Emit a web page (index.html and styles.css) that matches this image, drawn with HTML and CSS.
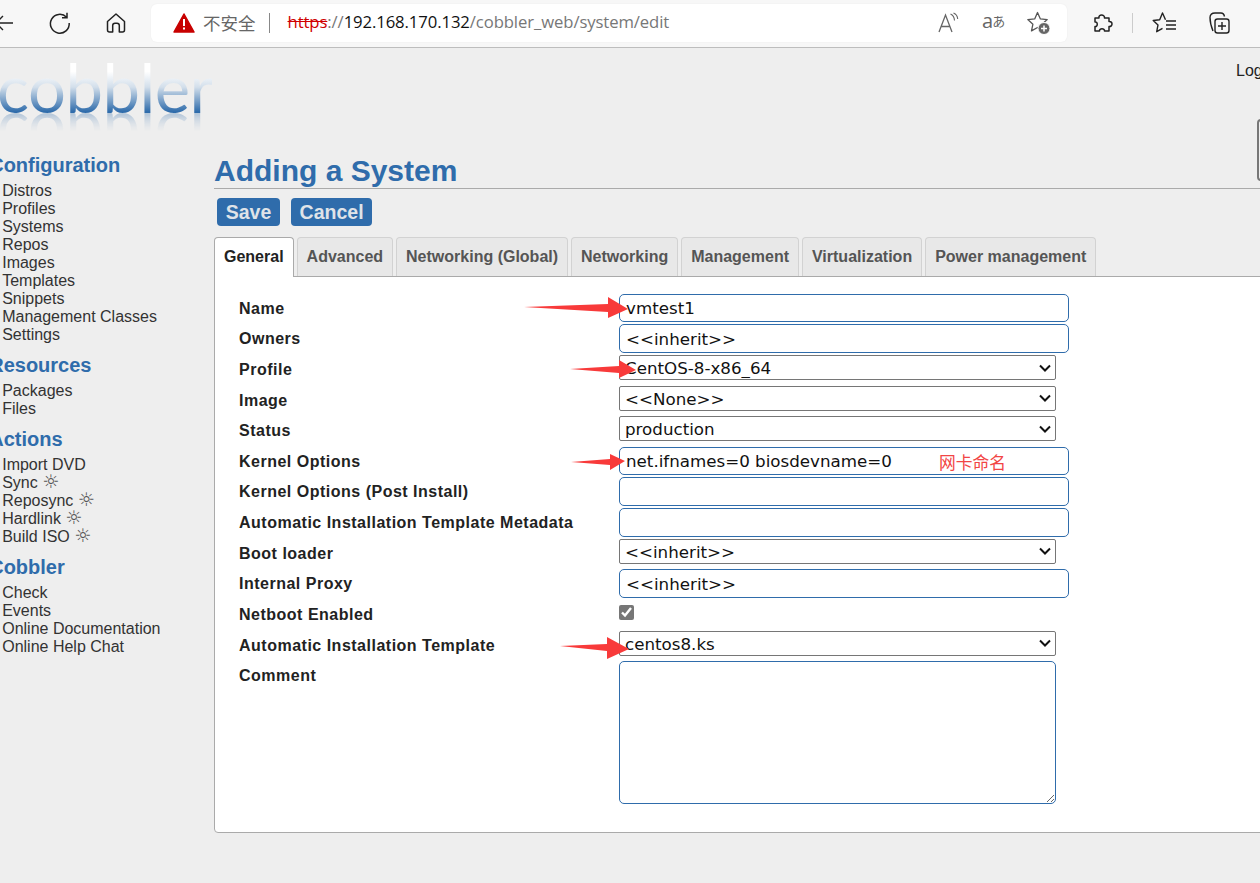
FILE: index.html
```html
<!DOCTYPE html>
<html lang="en">
<head>
<meta charset="utf-8">
<title>Adding a System</title>
<link rel="stylesheet" href="styles.css">
</head>
<body>
<div class="toolbar">
  <div class="nav-icons">
    <svg class="back" width="20" height="20" viewBox="0 0 20 20"><path d="M15 10H-1M5 3l-7 7 7 7" fill="none" stroke="#222" stroke-width="1.4"/></svg>
    <svg class="ic" width="24" height="24" viewBox="0 0 24 24"><path d="M18.6 6.2A9.4 9.4 0 1 0 21.2 12M19 1.8v5h-5" fill="none" stroke="#222" stroke-width="1.5"/></svg>
    <svg class="ic" width="24" height="24" viewBox="0 0 24 24"><path d="M3.5 10.5 12 3l8.500 7.500V19a2 2 0 0 1-2 2h-3.200v-6.500a2.300 2.300 0 0 0-2.300-2.300h-2a2.300 2.300 0 0 0-2.300 2.300V21H5.500a2 2 0 0 1-2-2z" fill="none" stroke="#222" stroke-width="1.500" stroke-linejoin="round"/></svg>
  </div>
  <div class="address">
    <svg class="warn" width="22" height="20" viewBox="0 0 22 20"><path d="M11 1 21 19H1z" fill="#c80000" stroke="#c80000" stroke-width="1.500" stroke-linejoin="round"/><path d="M10 6h2v7h-2zM10 14.500h2v2h-2z" fill="#fff"/></svg>
    <span class="insecure">不安全</span>
    <span class="addr-sep"></span>
    <span class="url"><span class="scheme">https</span><span class="dim">://</span>192.168.170.132<span class="dim">/cobbler_web/system/edit</span></span>
    <div class="addr-icons">
      <svg width="24" height="24" viewBox="0 0 24 24"><path d="M2 21 8.500 4 15 21M4.300 15.500h8.400" fill="none" stroke="#666" stroke-width="1.300"/><path d="M13.500 3c2.500 1 3.800 3.300 4 6.500M16.500 2c2.500 1 4 3.300 4.200 6" fill="none" stroke="#666" stroke-width="1.100"/></svg>
      <span class="translate"><span>a</span><span class="kana">あ</span></span>
      <svg width="24" height="24" viewBox="0 0 24 24"><path d="M10.500 1.500l2.900 6.400 6.800.7-5.100 4.600 1.500 6.700-6.100-3.400-6 3.400 1.400-6.700-5.100-4.600 6.900-.7z" fill="none" stroke="#555" stroke-width="1.300" stroke-linejoin="round"/><circle cx="17" cy="17.500" r="6" fill="#666" stroke="#fff" stroke-width="1"/><path d="M17 14.500v6M14 17.500h6" stroke="#fff" stroke-width="1.500"/></svg>
    </div>
  </div>
  <div class="tool-icons">
    <svg width="24" height="24" viewBox="0 0 24 24"><path d="M5 7H9C8 3 15 3 14.500 7H19V10.500C23 10 23 16 19 15.500V20H14.500C15 17 9 17 9.500 20H5V15.500C8 16 8 10.500 5 11Z" fill="none" stroke="#222" stroke-width="1.500" stroke-linejoin="round"/></svg>
    <span class="tool-sep"></span>
    <svg class="fav" width="26" height="24" viewBox="0 0 26 24"><path d="M13.500 8.800 10.500 2 7.700 8.800 1.200 9.500l4.800 4.400-1.300 6.800 5.800-3.400" fill="none" stroke="#222" stroke-width="1.400" stroke-linejoin="round"/><path d="M14 10h10M14 14h10M14 18h10" fill="none" stroke="#222" stroke-width="1.400"/></svg>
    <svg class="coll" width="24" height="24" viewBox="0 0 24 24"><rect x="8" y="8" width="14" height="14" rx="2.500" fill="none" stroke="#222" stroke-width="1.400"/><path d="M15 11v8M11 15h8" stroke="#222" stroke-width="1.400"/><path d="M6 20C4 15 3 10 3 6.500 3 3 5 2 8 2h6c2 0 3 1 3.500 3.500" fill="none" stroke="#222" stroke-width="1.400"/></svg>
  </div>
</div>

<header class="site-head">
  <div class="logo">cobbler</div>
  <a class="logout">Logout</a>
</header>
<div class="side-tab"></div>

<div class="content">
  <nav class="sidebar">
    <h2>Configuration</h2>
    <ul>
      <li>Distros</li><li>Profiles</li><li>Systems</li><li>Repos</li><li>Images</li><li>Templates</li><li>Snippets</li><li>Management Classes</li><li>Settings</li>
    </ul>
    <h2>Resources</h2>
    <ul><li>Packages</li><li>Files</li></ul>
    <h2>Actions</h2>
    <ul>
      <li>Import DVD</li>
      <li>Sync <span class="sun">☼</span></li>
      <li>Reposync <span class="sun">☼</span></li>
      <li>Hardlink <span class="sun">☼</span></li>
      <li>Build ISO <span class="sun">☼</span></li>
    </ul>
    <h2>Cobbler</h2>
    <ul><li>Check</li><li>Events</li><li>Online Documentation</li><li>Online Help Chat</li></ul>
  </nav>

  <main class="main">
    <h1>Adding a System</h1>
    <div class="actions">
      <button class="btn" type="button">Save</button>
      <button class="btn" type="button">Cancel</button>
    </div>
    <div class="tabs">
      <div class="tab active">General</div>
      <div class="tab">Advanced</div>
      <div class="tab">Networking (Global)</div>
      <div class="tab">Networking</div>
      <div class="tab">Management</div>
      <div class="tab">Virtualization</div>
      <div class="tab">Power management</div>
    </div>
    <form class="panel">
      <div class="row"><label>Name</label><input class="field" value="vmtest1"></div>
      <div class="row"><label>Owners</label><input class="field" value="&lt;&lt;inherit&gt;&gt;"></div>
      <div class="row"><label>Profile</label><select class="pick"><option>CentOS-8-x86_64</option></select></div>
      <div class="row"><label>Image</label><select class="pick"><option>&lt;&lt;None&gt;&gt;</option></select></div>
      <div class="row"><label>Status</label><select class="pick"><option>production</option></select></div>
      <div class="row"><label>Kernel Options</label><input class="field" value="net.ifnames=0 biosdevname=0"></div>
      <div class="row"><label>Kernel Options (Post Install)</label><input class="field"></div>
      <div class="row"><label>Automatic Installation Template Metadata</label><input class="field"></div>
      <div class="row"><label>Boot loader</label><select class="pick"><option>&lt;&lt;inherit&gt;&gt;</option></select></div>
      <div class="row"><label>Internal Proxy</label><input class="field" value="&lt;&lt;inherit&gt;&gt;"></div>
      <div class="row"><label>Netboot Enabled</label><input class="check" type="checkbox" checked></div>
      <div class="row"><label>Automatic Installation Template</label><select class="pick"><option>centos8.ks</option></select></div>
      <div class="row"><label>Comment</label><textarea class="note"></textarea></div>
    </form>
  </main>
</div>

<svg class="arrows" width="1260" height="883" viewBox="0 0 1260 883">
  <path d="M524 307 608 304V297L628 309 608 318V312Z"/>
  <path d="M570 369 619 366V360L636 370 619 378V373Z"/>
  <path d="M571 462 610 459V454L625 461 610 470V465Z"/>
  <path d="M560 646 607 644V637L629 649 607 659V651Z"/>
</svg>
<span class="remark">网卡命名</span>
</body>
</html>
```
FILE: styles.css
```css
* { box-sizing: border-box; }
html, body { margin: 0; height: 883px; overflow: hidden; }
body {
  position: relative;
  background: #eee;
  font-family: "Liberation Sans", Arial, sans-serif;
  font-size: 16px;
  color: #333;
}

/* browser chrome */
.toolbar {
  height: 48px;
  background: #f7f7f7;
  border-bottom: 1px solid #bdbdbd;
  display: flex;
  align-items: center;
}
.nav-icons { width: 151px; display: flex; align-items: center; flex: none; margin-top: -2px; }
.back { margin-right: 30px; flex: none; margin-left: -2px; }
.ic { margin-right: 31.500px; flex: none; }
.address {
  width: 916px;
  height: 38px;
  margin-top: -2px;
  background: #fff;
  border-radius: 6px;
  display: flex;
  align-items: center;
  padding-left: 22px;
  flex: none;
  font-family: "Open Sans", sans-serif;
  font-size: 16.700px;
  box-shadow: 0 0 2px rgba(0,0,0,.06);
}
.warn { flex: none; }
.insecure {
  margin-left: 8px;
  font-family: "Noto Sans CJK SC", sans-serif;
  font-size: 17.500px;
  color: #666;
}
.addr-sep { width: 1px; height: 20px; background: #888; margin: 0 18px 0 13px; }
.url { color: #111; white-space: nowrap; letter-spacing: -.1px; line-height: 38px; margin-top: -2px; }
.scheme { color: #d00000; text-decoration: line-through; }
.dim { color: #777; }
.addr-icons { margin-left: auto; margin-right: 16px; display: flex; align-items: center; gap: 21px; }
.translate { color: #666; font-size: 20px; display: flex; align-items: center; width: 24px; margin-top: -4px; }
.kana { font-family: "Noto Sans CJK JP", sans-serif; font-size: 13px; margin-left: -1px; }
.tool-icons { display: flex; align-items: center; margin-left: 23px; flex: none; margin-top: -2px; }
.tool-sep { width: 1px; height: 20px; background: #ccc; margin: 0 19px 0 18px; }
.fav { margin-right: 29px; }
.coll { flex: none; }

/* site header */
.site-head {
  height: 105px;
  display: flex;
  justify-content: space-between;
  align-items: flex-start;
}
.logo {
  width: 215px;
  margin-left: -3px;
  height: 62px;
  font-family: "Lato", sans-serif;
  font-weight: 400;
  font-size: 67px;
  line-height: 62px;
  letter-spacing: -.5px;
  margin-top: 8px;
  background: linear-gradient(#fff 25%, #d3dfeb 50%, #2f6cab 90%);
  -webkit-background-clip: text;
  background-clip: text;
  color: transparent;
  -webkit-box-reflect: below -10px linear-gradient(transparent 62%, rgba(255,255,255,.4));
}
.logout { margin: 14px -25px 0 0; color: #222; line-height: 18px; }
.side-tab {
  position: absolute;
  left: 1257px;
  top: 119px;
  width: 12px;
  height: 62px;
  border: 2px solid #777;
  border-radius: 4px;
}

/* page */
.content { display: flex; align-items: flex-start; }
.sidebar { width: 214px; flex: none; padding-left: 2.200px; }
.sidebar h2 {
  margin: 9px 0 5px -13px;
  font-size: 20px;
  line-height: 24px;
  font-weight: bold;
  color: #2f6cab;
}
.sidebar h2:first-child { margin-top: 0; }
.sidebar ul { list-style: none; margin: 0; padding: 0; }
.sidebar li { line-height: 18px; color: #333; white-space: nowrap; }
.sun { font-family: "DejaVu Sans", sans-serif; color: #555; font-size: 19px; line-height: 14px; }

.main { flex: 1; min-width: 0; }
.main h1 {
  margin: 0;
  height: 36px;
  font-size: 30px;
  line-height: 36px;
  font-weight: bold;
  color: #2f6cab;
  border-bottom: 1px solid #aaa;
  margin-right: -10px;
}
.actions { display: flex; gap: 11px; padding: 9px 0 0 3px; }
.btn {
  height: 28px;
  padding: 0 8.700px;
  border: 0;
  border-radius: 4px;
  background: #2f6cab;
  color: #dfe3e8;
  font: bold 19.500px/28px "Liberation Sans", Arial, sans-serif;
}
.tabs { display: flex; gap: 3px; margin-top: 11px; position: relative; z-index: 1; height: 40px; }
.tab {
  height: 39px;
  padding: 0 9px;
  line-height: 38px;
  font-weight: bold;
  color: #555;
  background: #e8e8e8;
  border: 1px solid #d2d2d2;
  border-bottom: 0;
  border-radius: 4px 4px 0 0;
  white-space: nowrap;
}
.tab.active { height: 40px; background: #fff; color: #222; border-color: #aaa; }
.panel {
  height: 557px;
  margin: -1px -10px 0 0;
  padding: 16.800px 0 0 24px;
  background: #fff;
  border: 1px solid #aaa;
  border-radius: 0 0 0 4px;
}
.row { display: flex; align-items: flex-start; min-height: 30.620px; }
.row label {
  width: 380px;
  flex: none;
  font-weight: bold;
  color: #222;
  line-height: 28px;
  letter-spacing: .5px;
  padding-top: 1px;
}
.field, .pick, .note {
  font-family: "DejaVu Sans", sans-serif;
  font-size: 16.700px;
  color: #111;
  background-color: #fff;
}
.field {
  width: 450px;
  height: 28.500px;
  padding: 0 6px;
  border: 1px solid #2f6cab;
  border-radius: 5px;
}
.pick {
  width: 437px;
  height: 25px;
  padding: 1px 24px 0 5px;
  border: 1px solid #767676;
  border-radius: 2px;
  appearance: none;
  -webkit-appearance: none;
  background-image: url("data:image/svg+xml,%3Csvg xmlns='http://www.w3.org/2000/svg' width='14' height='10' viewBox='0 0 14 10'%3E%3Cpath d='M2 2.500 7 7.500 12 2.500' fill='none' stroke='%23111' stroke-width='2'/%3E%3C/svg%3E");
  background-repeat: no-repeat;
  background-position: right 3px center;
}
.note {
  width: 437px;
  height: 143px;
  border: 1px solid #2f6cab;
  border-radius: 5px;
  display: block;
}
.check { width: 15px; height: 15px; margin: 5.500px 0 0; accent-color: #767676; }

/* screenshot annotations */
.arrows { position: absolute; left: 0; top: 0; pointer-events: none; fill: #f83a3a; }
.remark {
  position: absolute;
  left: 939px;
  top: 451px;
  font-family: "Noto Sans CJK SC", sans-serif;
  font-size: 16.800px;
  line-height: 22px;
  color: #f24545;
}
```
